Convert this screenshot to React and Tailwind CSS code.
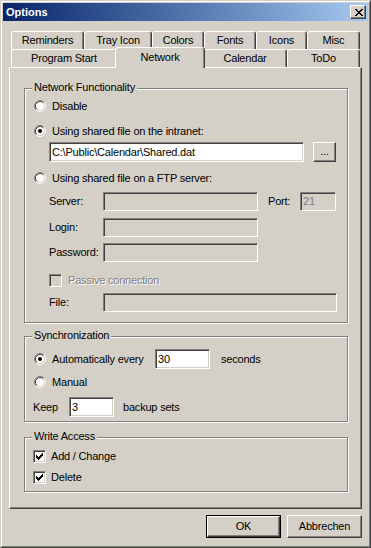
import React from "react";

function Radio({ checked }) {
  return (
    <svg width="12" height="12" viewBox="0 0 12 12" className="shrink-0 ml-[1px]">
      <circle cx="6" cy="6" r="4.6" fill="#ffffff" />
      <path d="M2.11 9.89A5.5 5.5 0 0 1 9.89 2.11" stroke="#808080" fill="none" />
      <path d="M9.89 2.11A5.5 5.5 0 0 1 2.11 9.89" stroke="#ffffff" fill="none" />
      <path d="M2.82 9.18A4.5 4.5 0 0 1 9.18 2.82" stroke="#404040" fill="none" />
      <path d="M9.18 2.82A4.5 4.5 0 0 1 2.82 9.18" stroke="#d4d0c8" fill="none" />
      {checked && <circle cx="6" cy="6" r="2" fill="#000000" />}
    </svg>
  );
}

function Check({ checked, disabled }) {
  return (
    <div
      className={
        "relative shrink-0 w-[13px] h-[13px] border border-t-[#808080] border-l-[#808080] border-r-white border-b-white shadow-[inset_1px_1px_0_#404040,inset_-1px_-1px_0_#d4d0c8] " +
        (disabled ? "bg-[#d4d0c8]" : "bg-white")
      }
    >
      {checked && (
        <svg width="7" height="7" viewBox="0 0 7 7" shapeRendering="crispEdges" className="absolute left-[2px] top-[2px]">
          <path
            d="M0 2h1v3H0z M1 3h1v3H1z M2 4h1v3H2z M3 3h1v3H3z M4 2h1v3H4z M5 1h1v3H5z M6 0h1v3H6z"
            fill="#000000"
          />
        </svg>
      )}
    </div>
  );
}

function Edit({ className, white, gray, children }) {
  return (
    <div
      className={
        "h-full shrink-0 border border-t-[#808080] border-l-[#808080] border-r-white border-b-white shadow-[inset_1px_1px_0_#404040,inset_-1px_-1px_0_#d4d0c8] flex items-center pl-[2px] whitespace-nowrap overflow-hidden " +
        (white ? "bg-white " : "bg-[#d4d0c8] ") +
        (gray ? "text-[#808080] " : "text-black ") +
        className
      }
    >
      {children}
    </div>
  );
}

function Button({ className, def, children }) {
  const inner = (
    <div className="w-full h-full flex items-center justify-center border border-t-white border-l-white border-r-[#404040] border-b-[#404040] shadow-[inset_-1px_-1px_0_#808080] bg-[#d4d0c8]">
      {children}
    </div>
  );
  return (
    <div className={"shrink-0 " + (def ? "border border-black " : "") + className}>{inner}</div>
  );
}

function Tab({ label, className, selected }) {
  return (
    <div
      className={
        "flex items-center justify-center bg-[#d4d0c8] border-l border-t border-r border-l-white border-t-white border-r-[#404040] rounded-t-[3px] shadow-[inset_-1px_0_0_#808080] whitespace-nowrap " +
        (selected ? "relative z-10 h-[21px] -mx-[2px] -mb-[1px] pb-[2px] " : "h-full ") +
        className
      }
    >
      {label}
    </div>
  );
}

function Group({ label, className, children }) {
  return (
    <div
      className={
        "relative w-[324px] border border-[#808080] shadow-[inset_1px_1px_0_#ffffff,1px_1px_0_#ffffff] pl-[8px] flex flex-col " +
        className
      }
    >
      <div className="absolute -top-[8px] left-[7px] px-[2px] bg-[#d4d0c8] leading-[13px] whitespace-nowrap">
        {label}
      </div>
      {children}
    </div>
  );
}

function RadioRow({ checked, label, className }) {
  return (
    <div className={"h-[20px] flex items-center gap-[6px] whitespace-nowrap " + (className || "")}>
      <Radio checked={checked} />
      <span>{label}</span>
    </div>
  );
}

export default function App() {
  return (
    <div className="w-[371px] h-[548px] bg-[#d4d0c8] border border-t-[#d4d0c8] border-l-[#d4d0c8] border-r-[#404040] border-b-[#404040] text-[11px] leading-[13px] tracking-[-0.2px] text-black font-['Liberation_Sans',Arial,sans-serif] select-none">
      <div className="h-full border border-t-white border-l-white border-r-[#808080] border-b-[#808080] p-[1px] flex flex-col">
        {/* Title bar */}
        <div className="h-[18px] shrink-0 flex items-center justify-between bg-linear-to-r from-[#0a246a] to-[#a6caf0] pl-[3px] pr-[2px]">
          <span className="text-white font-bold tracking-normal">Options</span>
          <div className="w-[16px] h-[14px] flex items-center justify-center border border-t-white border-l-white border-r-[#404040] border-b-[#404040] shadow-[inset_-1px_-1px_0_#808080] bg-[#d4d0c8] pl-[1px]">
            <svg width="8" height="7" viewBox="0 0 8 7" shapeRendering="crispEdges">
              <path
                d="M0 0h2v1H0z M6 0h2v1H6z M1 1h2v1H1z M5 1h2v1H5z M2 2h4v1H2z M3 3h2v1H3z M2 4h4v1H2z M1 5h2v1H1z M5 5h2v1H5z M0 6h2v1H0z M6 6h2v1H6z"
                fill="#000000"
              />
            </svg>
          </div>
        </div>

        {/* Body */}
        <div className="flex-1 flex flex-col px-[6px] pt-[10px]">
          {/* Tabs */}
          <div className="h-[36px] shrink-0 flex flex-col px-[2px]">
            <div className="h-[18px] flex">
              <Tab label="Reminders" className="w-[73px]" />
              <Tab label="Tray Icon" className="w-[68px]" />
              <Tab label="Colors" className="w-[52px]" />
              <Tab label="Fonts" className="w-[52px]" />
              <Tab label="Icons" className="w-[51px]" />
              <Tab label="Misc" className="w-[53px]" />
            </div>
            <div className="h-[18px] flex items-end">
              <Tab label="Program Start" className="w-[106px]" />
              <Tab label="Network" className="w-[90px]" selected />
              <Tab label="Calendar" className="w-[84px]" />
              <Tab label="ToDo" className="w-[73px]" />
            </div>
          </div>

          {/* Panel */}
          <div className="h-[442px] shrink-0 border border-t-white border-l-white border-r-[#404040] border-b-[#404040] shadow-[inset_-1px_-1px_0_#808080] pt-[20px] pl-[14px] flex flex-col">
            <Group label="Network Functionality" className="pt-[7px] pb-[10px]">
              <RadioRow label="Disable" />
              <RadioRow label="Using shared file on the intranet:" checked className="mt-[5px]" />
              <div className="mt-[1px] h-[20px] flex items-center pl-[16px]">
                <Edit className="w-[255px]" white>
                  {"C:\\Public\\Calendar\\Shared.dat"}
                </Edit>
                <Button className="ml-[9px] w-[23px] h-[20px]">
                  <span className="pb-[1px]">...</span>
                </Button>
              </div>
              <RadioRow label="Using shared file on a FTP server:" className="mt-[6px]" />
              <div className="mt-[4px] h-[19px] flex items-center pl-[16px]">
                <span className="w-[54px] shrink-0">Server:</span>
                <Edit className="w-[155px]" />
                <span className="ml-[10px] w-[32px] shrink-0">Port:</span>
                <Edit className="w-[36px]" gray>
                  21
                </Edit>
              </div>
              <div className="mt-[7px] h-[19px] flex items-center pl-[16px]">
                <span className="w-[54px] shrink-0">Login:</span>
                <Edit className="w-[155px]" />
              </div>
              <div className="mt-[6px] h-[19px] flex items-center pl-[16px]">
                <span className="w-[54px] shrink-0">Password:</span>
                <Edit className="w-[155px]" />
              </div>
              <div className="mt-[8px] h-[20px] flex items-center gap-[6px] pl-[16px]">
                <Check disabled />
                <span className="text-[#808080] [text-shadow:1px_1px_0_#ffffff]">Passive connection</span>
              </div>
              <div className="mt-[3px] h-[19px] flex items-center pl-[16px]">
                <span className="w-[54px] shrink-0">File:</span>
                <Edit className="w-[234px]" />
              </div>
            </Group>

            <Group label="Synchronization" className="mt-[13px] pt-[12px] pb-[4px]">
              <div className="h-[20px] flex items-center">
                <div className="w-[122px] shrink-0 flex items-center gap-[6px] whitespace-nowrap">
                  <Radio checked />
                  <span>Automatically every</span>
                </div>
                <Edit className="w-[55px]" white>
                  30
                </Edit>
                <span className="ml-[11px]">seconds</span>
              </div>
              <RadioRow label="Manual" className="mt-[3px]" />
              <div className="mt-[5px] h-[20px] flex items-center">
                <span className="w-[36px] shrink-0">Keep</span>
                <Edit className="w-[45px]" white>
                  3
                </Edit>
                <span className="ml-[9px]">backup sets</span>
              </div>
            </Group>

            <Group label="Write Access" className="mt-[15px] pt-[8px] pb-[4px]">
              <div className="h-[20px] flex items-center gap-[5px]">
                <Check checked />
                <span>Add / Change</span>
              </div>
              <div className="mt-[1px] h-[20px] flex items-center gap-[5px]">
                <Check checked />
                <span>Delete</span>
              </div>
            </Group>
          </div>

          {/* Buttons */}
          <div className="mt-[6px] flex justify-end gap-[6px]">
            <Button def className="w-[75px] h-[23px]">
              OK
            </Button>
            <Button className="w-[75px] h-[23px]">Abbrechen</Button>
          </div>
        </div>
      </div>
    </div>
  );
}
